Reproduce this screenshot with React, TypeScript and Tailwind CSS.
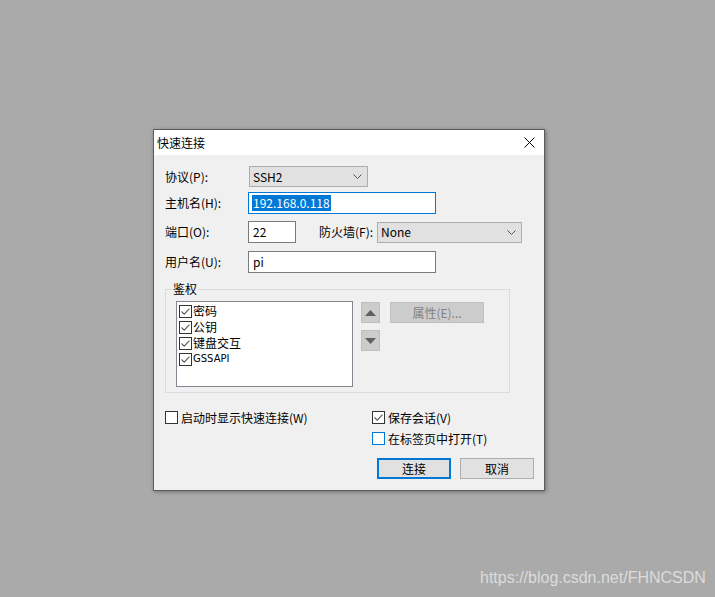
import React from "react";

function Check({ checked, focus }: { checked?: boolean; focus?: boolean }) {
  return (
    <span
      className={`flex h-[13px] w-[13px] shrink-0 items-center justify-center border bg-white ${
        focus ? "border-[#0078d7]" : "border-[#333333]"
      }`}
    >
      {checked ? (
        <svg width="11" height="11" viewBox="0 0 11 11">
          <path d="M1.5 5.5 L4.2 8.2 L9.5 2.6" fill="none" stroke="#5a5a5a" strokeWidth="1.1" />
        </svg>
      ) : null}
    </span>
  );
}

function Chevron() {
  return (
    <svg width="9" height="5" viewBox="0 0 9 5">
      <path d="M0.5 0.5 L4.5 4.5 L8.5 0.5" fill="none" stroke="#555555" strokeWidth="1" />
    </svg>
  );
}

const AUTH_ITEMS = [
  { label: "密码", latin: false },
  { label: "公钥", latin: false },
  { label: "键盘交互", latin: false },
  { label: "GSSAPI", latin: true },
];

export default function App() {
  return (
    <div className="relative h-[597px] w-[715px] bg-[#aaaaaa] pl-[153px] pt-[129px] font-['Noto_Sans_CJK_SC',sans-serif] text-[12px] leading-[16px] text-black">
      <div className="flex h-[362px] w-[392px] flex-col border border-[#5c5c5c] bg-[#f0f0f0] shadow-[1px_1px_4px_rgba(0,0,0,0.35)]">
        {/* title bar */}
        <div className="flex h-[25px] items-center justify-between bg-white pl-[3px] pr-[9px]">
          <span>快速连接</span>
          <svg width="11" height="11" viewBox="0 0 11 11">
            <path d="M0.5 0.5 L10.5 10.5 M10.5 0.5 L0.5 10.5" stroke="#000" strokeWidth="1" />
          </svg>
        </div>

        <div className="pl-[11px] pt-[11px]">
          <div className="flex h-[21px] items-center">
            <span className="w-[84px]">协议(P):</span>
            <div className="flex h-[21px] w-[119px] items-center justify-between border border-[#adadad] bg-[#e1e1e1] pl-[3px] pr-[5px]">
              <span>SSH2</span>
              <Chevron />
            </div>
          </div>

          <div className="mt-[5px] flex h-[22px] items-center">
            <span className="w-[83px]">主机名(H):</span>
            <div className="flex h-[22px] w-[188px] items-center border border-[#0078d7] bg-white pl-[3px]">
              <span className="bg-[#0078d7] px-[1px] text-white">192.168.0.118</span>
            </div>
          </div>

          <div className="mt-[7px] flex h-[22px] items-center">
            <span className="w-[83px]">端口(O):</span>
            <div className="flex h-[22px] w-[48px] items-center border border-[#7a7a7a] bg-white pl-[4px]">22</div>
            <span className="ml-[23px] w-[58px]">防火墙(F):</span>
            <div className="flex h-[21px] w-[145px] items-center justify-between border border-[#adadad] bg-[#e1e1e1] pl-[3px] pr-[5px]">
              <span>None</span>
              <Chevron />
            </div>
          </div>

          <div className="mt-[8px] flex h-[22px] items-center">
            <span className="w-[83px]">用户名(U):</span>
            <div className="flex h-[22px] w-[188px] items-center border border-[#7a7a7a] bg-white pl-[4px]">pi</div>
          </div>

          {/* auth group */}
          <div className="relative mt-[16px] h-[104px] w-[345px] border border-[#dcdcdc]">
            <span className="absolute left-[6px] top-[-9px] bg-[#f0f0f0] px-[1px]">鉴权</span>
            <div className="flex pl-[10px] pt-[11px]">
              <div className="flex h-[86px] w-[177px] flex-col border border-[#828790] bg-white pl-[2px] pt-[1px]">
                {AUTH_ITEMS.map((item) => (
                  <div key={item.label} className="flex h-[16px] items-center gap-[1px]">
                    <Check checked />
                    <span className={item.latin ? "font-['DejaVu_Sans',sans-serif] text-[10px]" : ""}>
                      {item.label}
                    </span>
                  </div>
                ))}
              </div>

              <div className="ml-[8px] mt-[1px] flex flex-col gap-[7px]">
                <div className="flex h-[21px] w-[19px] items-center justify-center border border-[#bfbfbf] bg-[#cccccc]">
                  <svg width="11" height="6" viewBox="0 0 11 6">
                    <polygon points="5.5,0 11,6 0,6" fill="#606060" />
                  </svg>
                </div>
                <div className="flex h-[21px] w-[19px] items-center justify-center border border-[#bfbfbf] bg-[#cccccc]">
                  <svg width="11" height="6" viewBox="0 0 11 6">
                    <polygon points="0,0 11,0 5.5,6" fill="#606060" />
                  </svg>
                </div>
              </div>

              <div className="ml-[10px] mt-[1px] flex h-[21px] w-[94px] items-center justify-center border border-[#bfbfbf] bg-[#cccccc] text-[#838383]">
                属性(E)...
              </div>
            </div>
          </div>

          {/* options + buttons */}
          <div className="mt-[18px] flex">
            <div className="flex h-[13px] w-[207px] items-center gap-[3px]">
              <Check />
              <span>启动时显示快速连接(W)</span>
            </div>
            <div className="flex flex-col">
              <div className="flex h-[13px] items-center gap-[3px]">
                <Check checked />
                <span>保存会话(V)</span>
              </div>
              <div className="mt-[8px] flex h-[13px] items-center gap-[3px]">
                <Check focus />
                <span>在标签页中打开(T)</span>
              </div>
              <div className="ml-[5px] mt-[13px] flex gap-[9px]">
                <div className="flex h-[21px] w-[74px] items-center justify-center border-2 border-[#0078d7] bg-[#e1e1e1]">
                  连接
                </div>
                <div className="flex h-[21px] w-[74px] items-center justify-center border border-[#adadad] bg-[#e1e1e1]">
                  取消
                </div>
              </div>
            </div>
          </div>
        </div>
      </div>

      <span className="absolute left-[480px] top-[570px] font-['Liberation_Sans',sans-serif] text-[16px] leading-none text-[#dcdcdc]">
        https://blog.csdn.net/FHNCSDN
      </span>
    </div>
  );
}
